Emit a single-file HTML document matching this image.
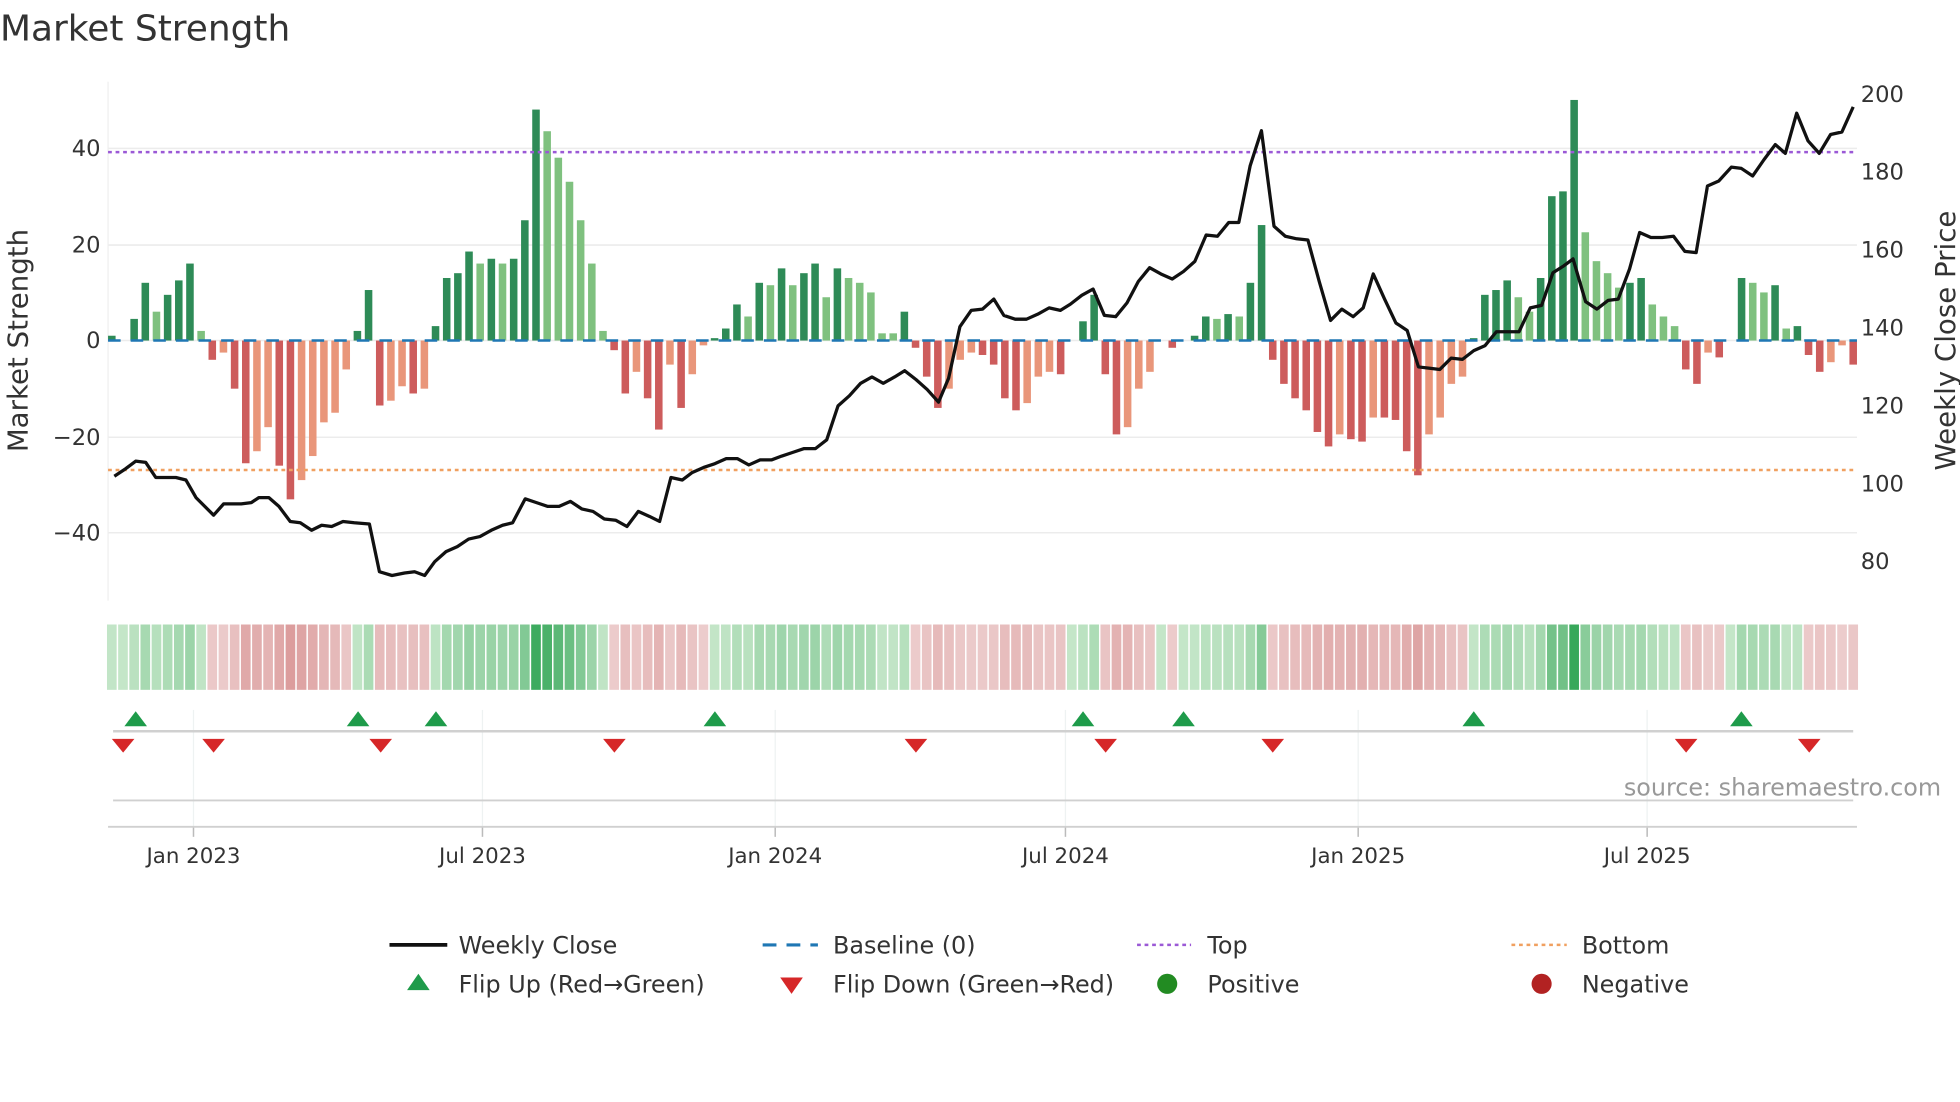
<!DOCTYPE html>
<html><head><meta charset="utf-8"><style>
html,body{margin:0;padding:0;background:#fff;}
svg{display:block;font-family:"DejaVu Sans","Liberation Sans",sans-serif;}
</style></head><body>
<svg id="s" width="1960" height="1102" viewBox="0 0 1560 877" xmlns="http://www.w3.org/2000/svg">
<rect width="1560" height="877" fill="#fff"/>
<text x="0" y="32" font-size="28.6" fill="#333">Market Strength</text>
<g id="grid"></g>
<g id="bars"></g>
<g id="heat"></g>
<g id="lines"></g>
<text x="22" y="271" font-size="22" fill="#333" text-anchor="middle" transform="rotate(-90 22 271)">Market Strength</text>
<text x="1556" y="271" font-size="22" fill="#333" text-anchor="middle" transform="rotate(-90 1556 271)">Weekly Close Price</text>
<text x="1545" y="633" font-size="19" fill="#999" text-anchor="end">source: sharemaestro.com</text>
<g font-size="19" fill="#333">
<line x1="310" y1="752" x2="356" y2="752" stroke="#111" stroke-width="3"/>
<text x="365" y="759">Weekly Close</text>
<line x1="607" y1="752" x2="651" y2="752" stroke="#1f77b4" stroke-width="2.5" stroke-dasharray="11,8"/>
<text x="663" y="759">Baseline (0)</text>
<line x1="905" y1="752" x2="948" y2="752" stroke="#9b59d6" stroke-width="2" stroke-dasharray="3,3"/>
<text x="961" y="759">Top</text>
<line x1="1203" y1="752" x2="1247" y2="752" stroke="#f0a060" stroke-width="2" stroke-dasharray="3,3"/>
<text x="1259" y="759">Bottom</text>
<polygon points="324,788 342,788 333,775" fill="#1e9b4a"/>
<text x="365" y="790">Flip Up (Red→Green)</text>
<polygon points="621,778 639,778 630,791" fill="#d62728"/>
<text x="663" y="790">Flip Down (Green→Red)</text>
<circle cx="929" cy="783" r="8" fill="#228b22"/>
<text x="961" y="790">Positive</text>
<circle cx="1227" cy="783" r="8" fill="#b22222"/>
<text x="1259" y="790">Negative</text>
</g>
</svg>
<script>
var NS="http://www.w3.org/2000/svg";
function el(p,t,a,txt){var e=document.createElementNS(NS,t);for(var k in a)e.setAttribute(k,a[k]);if(txt!=null)e.textContent=txt;document.getElementById(p).appendChild(e);return e;}
[[40,118],[20,195],[0,271],[-20,348],[-40,424]].forEach(function(g){
 el("grid","line",{x1:86,x2:1478,y1:g[1],y2:g[1],stroke:"#ececec","stroke-width":1.2});
 el("grid","text",{x:80,y:g[1]+6,"font-size":18,fill:"#333","text-anchor":"end"},(g[0]<0?"\u2212"+(-g[0]):g[0]));
});
[[200,75],[180,137],[160,199],[140,261],[120,323],[100,385],[80,447]].forEach(function(g){
 el("grid","text",{x:1481,y:g[1]+6,"font-size":18,fill:"#333"},g[0]);
});
el("grid","line",{x1:86,x2:86,y1:65,y2:478,stroke:"#eee","stroke-width":1});
var months=[[154,"Jan 2023"],[384,"Jul 2023"],[617,"Jan 2024"],[848,"Jul 2024"],[1081,"Jan 2025"],[1311,"Jul 2025"]];
months.forEach(function(m){
 el("grid","line",{x1:m[0],x2:m[0],y1:565,y2:658,stroke:"#eef2f2","stroke-width":1});
 el("grid","line",{x1:m[0],x2:m[0],y1:658,y2:666,stroke:"#bbb","stroke-width":1.2});
 el("grid","text",{x:m[0],y:687,"font-size":17,fill:"#333","text-anchor":"middle"},m[1]);
});
el("grid","line",{x1:90,x2:1475,y1:582,y2:582,stroke:"#d0d0d0","stroke-width":2});
el("grid","line",{x1:90,x2:1475,y1:637,y2:637,stroke:"#d0d0d0","stroke-width":1.5});
el("grid","line",{x1:86,x2:1478,y1:658,y2:658,stroke:"#d0d0d0","stroke-width":1.5});
var D=[[1,1],[0,1],[4.5,1],[12,1],[6,0],[9.5,1],[12.5,1],[16,1],[2,0],[-4,1],[-2.5,0],[-10,1],[-25.5,1],[-23,0],[-18,0],[-26,1],[-33,1],[-29,0],[-24,0],[-17,0],[-15,0],[-6,0],[2,1],[10.5,1],[-13.5,1],[-12.5,0],[-9.5,0],[-11,1],[-10,0],[3,1],[13,1],[14,1],[18.5,1],[16,0],[17,1],[16,0],[17,1],[25,1],[48,1],[43.5,0],[38,0],[33,0],[25,0],[16,0],[2,0],[-2,1],[-11,1],[-6.5,0],[-12,1],[-18.5,1],[-5,0],[-14,1],[-7,0],[-1,0],[0.5,1],[2.5,1],[7.5,1],[5,0],[12,1],[11.5,0],[15,1],[11.5,0],[14,1],[16,1],[9,0],[15,1],[13,0],[12,0],[10,0],[1.5,0],[1.5,0],[6,1],[-1.5,1],[-7.5,1],[-14,1],[-10,0],[-4,0],[-2.5,0],[-3,1],[-5,1],[-12,1],[-14.5,1],[-13,0],[-7.5,0],[-6.5,0],[-7,1],[0,0],[4,1],[9.5,1],[-7,1],[-19.5,1],[-18,0],[-10,0],[-6.5,0],[0,0],[-1.5,1],[0,0],[1,1],[5,1],[4.5,0],[5.5,1],[5,0],[12,1],[24,1],[-4,1],[-9,1],[-12,1],[-14.5,1],[-19,1],[-22,1],[-19.5,0],[-20.5,1],[-21,1],[-16,0],[-16,1],[-16.5,1],[-23,1],[-28,1],[-19.5,0],[-16,0],[-9,0],[-7.5,0],[0.5,1],[9.5,1],[10.5,1],[12.5,1],[9,0],[6,0],[13,1],[30,1],[31,1],[50,1],[22.5,0],[16.5,0],[14,0],[11,0],[12,1],[13,1],[7.5,0],[5,0],[3,0],[-6,1],[-9,1],[-2.5,0],[-3.5,1],[0,0],[13,1],[12,0],[10,0],[11.5,1],[2.5,0],[3,1],[-3,1],[-6.5,1],[-4.5,0],[-1,0],[-5,1]];
var n=D.length, x0=89, step=(1475-89)/(n-1);
D.forEach(function(d,i){
 var x=x0+step*i, v=d[0], h=Math.abs(v)*3.83, c;
 if(v>=0)c=d[1]?"#2e8b57":"#7fc17f"; else c=d[1]?"#cd5c5c":"#e9967a";
 if(h>0.3) el("bars","rect",{x:x-3,y:v>=0?271-h:271,width:6,height:h,fill:c});
 var t=Math.min(Math.abs(v)/50,1), col, s=0.12+0.88*Math.pow(t,1.1);
 if(v>=0){col="rgb("+Math.round(215-160*s)+","+Math.round(238-70*s)+","+Math.round(215-125*s)+")";}
 else{col="rgb("+Math.round(240-30*s)+","+Math.round(215-85*s)+","+Math.round(215-85*s)+")";}
 el("heat","rect",{x:x-step/2+0.6,y:497,width:step-1.2,height:52,fill:col});
});
el("lines","line",{x1:86,x2:1478,y1:271,y2:271,stroke:"#1f77b4","stroke-width":2,"stroke-dasharray":"10,8"});
el("lines","line",{x1:86,x2:1478,y1:121,y2:121,stroke:"#9b59d6","stroke-width":2,"stroke-dasharray":"3,3"});
el("lines","line",{x1:86,x2:1478,y1:374,y2:374,stroke:"#f0a060","stroke-width":2,"stroke-dasharray":"3,3"});
var P=[[91,379],[100,373],[108,367],[116,368],[124,380],[133,380],[140,380],[148,382],[156,396],[170,410],[178,401],[192,401],[200,400],[206,396],[214,396],[222,403],[231,415],[239,416],[248,422],[256,418],[264,419],[273,415],[282,416],[294,417],[302,455],[312,458],[322,456],[330,455],[338,458],[346,447],[355,439],[364,435],[373,429],[382,427],[391,422],[400,418],[408,416],[418,397],[427,400],[436,403],[445,403],[454,399],[463,405],[472,407],[481,413],[490,414],[499,419],[508,407],[517,411],[525,415],[534,380],[543,382],[551,376],[560,372],[569,369],[578,365],[587,365],[596,370],[605,366],[614,366],[622,363],[631,360],[640,357],[649,357],[658,350],[667,323],[676,315],[685,305],[694,300],[703,305],[712,300],[720,295],[729,302],[738,310],[747,320],[755,301],[764,260],[773,247],[782,246],[791,238],[799,251],[808,254],[817,254],[826,250],[835,245],[844,247],[852,242],[861,235],[870,230],[879,251],[888,252],[897,241],[906,224],[915,213],[924,218],[933,222],[942,216],[951,208],[960,187],[969,188],[978,177],[986,177],[995,132],[1004,104],[1014,180],[1023,188],[1032,190],[1041,191],[1050,224],[1059,255],[1068,246],[1077,252],[1085,245],[1093,218],[1102,238],[1111,257],[1120,263],[1129,292],[1138,293],[1146,294],[1155,285],[1164,286],[1173,279],[1182,275],[1191,264],[1200,264],[1209,264],[1218,245],[1227,243],[1236,217],[1244,212],[1252,206],[1262,240],[1271,246],[1280,239],[1288,238],[1297,214],[1305,185],[1314,189],[1323,189],[1332,188],[1341,200],[1350,201],[1359,148],[1368,144],[1378,133],[1386,134],[1395,140],[1404,127],[1413,115],[1421,122],[1430,90],[1439,112],[1448,122],[1457,107],[1466,105],[1475,85]];
el("lines","polyline",{points:P.map(function(p){return p.join(",")}).join(" "),fill:"none",stroke:"#111","stroke-width":2.6,"stroke-linejoin":"round"});
[108,285,347,569,862,942,1173,1386].forEach(function(x){el("lines","polygon",{points:(x-9)+",578 "+(x+9)+",578 "+x+",566",fill:"#1e9b4a"});});
[98,170,303,489,729,880,1013,1342,1440].forEach(function(x){el("lines","polygon",{points:(x-9)+",588 "+(x+9)+",588 "+x+",599",fill:"#d62728"});});
</script>
</body></html>
